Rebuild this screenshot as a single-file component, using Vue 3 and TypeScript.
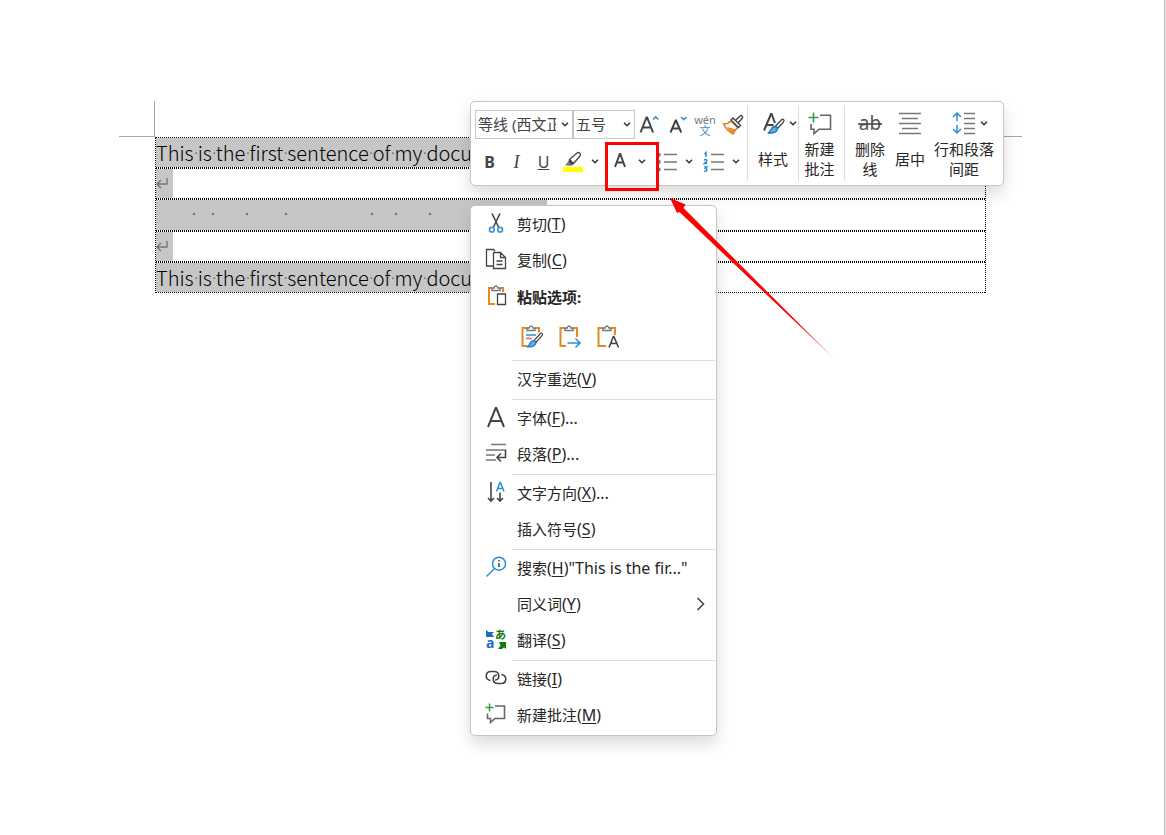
<script setup lang="ts">
interface MenuItem {
  id: string
  label: string
  accessKey: string
  tail?: string
  icon?: string
  submenu?: boolean
}

const words: string[] = ['This', 'is', 'the', 'first', 'sentence', 'of', 'my', 'docu']
const spaceMarks: number[] = [38, 57, 91, 130, 216, 240, 274]

const clipboardItems: MenuItem[] = [
  { id: 'cut', label: '剪切', accessKey: 'T', icon: 'cut' },
  { id: 'copy', label: '复制', accessKey: 'C', icon: 'copy' },
]

const groups: MenuItem[][] = [
  [{ id: 'reconvert', label: '汉字重选', accessKey: 'V' }],
  [
    { id: 'font', label: '字体', accessKey: 'F', tail: '...', icon: 'font' },
    { id: 'paragraph', label: '段落', accessKey: 'P', tail: '...', icon: 'paragraph' },
  ],
  [
    { id: 'direction', label: '文字方向', accessKey: 'X', tail: '...', icon: 'direction' },
    { id: 'symbol', label: '插入符号', accessKey: 'S' },
  ],
  [
    { id: 'search', label: '搜索', accessKey: 'H', tail: '"This is the fir..."', icon: 'search' },
    { id: 'synonym', label: '同义词', accessKey: 'Y', submenu: true },
    { id: 'translate', label: '翻译', accessKey: 'S', icon: 'translate' },
  ],
  [
    { id: 'link', label: '链接', accessKey: 'I', icon: 'link' },
    { id: 'comment', label: '新建批注', accessKey: 'M', icon: 'comment' },
  ],
]
</script>

<template>
  <div class="workspace">
    <main class="page">
      <i class="corner corner-left"></i>
      <i class="corner corner-right"></i>
      <div class="frame">
        <p class="line">
          <span class="selected sentence"><template v-for="(w, i) in words" :key="i"><span v-if="i" class="dot">·</span>{{ w }}</template></span>
        </p>
        <p class="line">
          <span class="selected mark"><svg width="14" height="14" viewBox="0 0 14 14"><path d="M11 1v6H1M5 3L1 7l4 4" /></svg></span>
        </p>
        <p class="line tall">
          <span class="selected blank">
            <svg width="391" height="30" viewBox="0 0 391 30"><circle v-for="x in spaceMarks" :key="x" :cx="x" cy="14" r="1.3" /></svg>
          </span>
        </p>
        <p class="line">
          <span class="selected mark"><svg width="14" height="14" viewBox="0 0 14 14"><path d="M11 1v6H1M5 3L1 7l4 4" /></svg></span>
        </p>
        <p class="line">
          <span class="selected sentence"><template v-for="(w, i) in words" :key="i"><span v-if="i" class="dot">·</span>{{ w }}</template></span>
        </p>
      </div>
    </main>

    <div class="toolbar" role="toolbar" aria-label="格式">
      <div class="fonts">
        <div class="row">
          <div class="combo family">
            <select aria-label="字体"><option>等线 (西文正文)</option></select>
            <svg class="chev" width="8" height="5" viewBox="0 0 8 5"><path d="M1 .8l3 3 3-3" /></svg>
          </div>
          <div class="combo size">
            <select aria-label="字号"><option>五号</option></select>
            <svg class="chev" width="8" height="5" viewBox="0 0 8 5"><path d="M1 .8l3 3 3-3" /></svg>
          </div>
          <button class="tool" aria-label="增大字号">
            <svg width="22" height="22" viewBox="0 0 22 22"><path class="ink bold" d="M2.500 18.500L8.500 3.500h.6l6 15M4.700 13.500h8.200" /><path class="blue" d="M15 5.500l2.700-2.600L20.400 5.500" /></svg>
          </button>
          <button class="tool" aria-label="减小字号">
            <svg width="22" height="22" viewBox="0 0 22 22"><path class="ink bold" d="M4.500 18.500L9.600 6.500h.5l5.100 12M6.400 14.500h6.900" /><path class="blue" d="M15 3l2.700 2.600L20.400 3" /></svg>
          </button>
          <button class="tool pinyin" aria-label="拼音指南"><span>wén</span><span>文</span></button>
          <button class="tool" aria-label="格式刷">
            <svg width="22" height="22" viewBox="0 0 22 22"><path d="M1.500 10c3.500 0 5.500-1 7.500-3l6.500 6.500c-1.500 2-3 4-4.500 6.500C7 18 3.500 14 1.500 10z" fill="#fff" stroke="#e07b1c" stroke-width="1.500" /><path d="M5 13l9 2.500-3.500 4.500C8 18 6.500 16 5 13z" fill="#ee8a2b" /><path d="M9 6l2-2 7.500 7.500-2 2zM13.500 6.500l4.500-4.500c1.500-1.200 3.500.8 2.300 2.300L16 9" fill="#fff" stroke="#444" stroke-width="1.400" /></svg>
          </button>
        </div>
        <div class="row controls">
          <button class="tool glyph" aria-label="加粗"><b>B</b></button>
          <button class="tool glyph" aria-label="倾斜"><em>I</em></button>
          <button class="tool glyph" aria-label="下划线"><u>U</u></button>
          <button class="split" aria-label="突出显示">
            <svg width="22" height="22" viewBox="0 0 22 22"><path d="M1 16h20v5H1z" fill="#ff0" /><path d="M3 14.500l4-5 4.500 4-1.800 1.200z" fill="#777" /><path class="ink thin" d="M7.500 8.500L15 2c2-1.500 4.500 1 3 3l-6.500 7.500zM7.500 8.500c-1 1.500 2 5 4 4" fill="#fff" /></svg>
            <svg class="chev" width="8" height="5" viewBox="0 0 8 5"><path d="M1 .8l3 3 3-3" /></svg>
          </button>
          <button class="split" aria-label="字体颜色">
            <svg width="22" height="22" viewBox="0 0 22 22"><path class="ink bold" d="M6 16l4.800-13h.5L16 16M7.700 11.500h6.600" /></svg>
            <svg class="chev" width="8" height="5" viewBox="0 0 8 5"><path d="M1 .8l3 3 3-3" /></svg>
          </button>
          <button class="split" aria-label="项目符号">
            <svg width="22" height="22" viewBox="0 0 22 22"><path d="M1 2h3.500v3.500H1zM1 9.300h3.500v3.500H1zM1 16.700h3.500v3.500H1z" fill="#2b8fd1" /><path class="gray" d="M8 3.500h13M8 11h13M8 18.500h13" /></svg>
            <svg class="chev" width="8" height="5" viewBox="0 0 8 5"><path d="M1 .8l3 3 3-3" /></svg>
          </button>
          <button class="split" aria-label="编号">
            <svg width="22" height="22" viewBox="0 0 22 22"><path class="blue thin" d="M1.500 3L3 1.500V6M1.200 9.500c.5-1.300 3-1.200 2.700.3-.2 1-2 1.800-2.700 2.700h3M1.200 16h2.700l-1.500 1.600c2 0 2 2.600 0 2.600H1.100" /><path class="gray" d="M8 3.500h13M8 11h13M8 18.500h13" /></svg>
            <svg class="chev" width="8" height="5" viewBox="0 0 8 5"><path d="M1 .8l3 3 3-3" /></svg>
          </button>
        </div>
      </div>

      <div class="group styles">
        <button class="big">
          <span class="art push">
            <svg width="24" height="24" viewBox="0 0 24 24"><path class="ink bold" d="M3 19.500L10 3h.6L14 12M5.500 14h7" /><path d="M22.500 8.500c1 .8.500 1.800-.5 3l-5.500 6-2.200-2 5.500-6c1-1.200 1.700-1.800 2.700-1z" fill="#fff" stroke="#444" stroke-width="1.300" /><path d="M14 15.500c1.800.2 2.800 1.500 2.300 3.200-.7 2.700-4.500 3.800-9.500 3.300 2.300-.8 2.700-2.500 3.500-4 .7-1.600 2-2.500 3.700-2.500z" fill="#5aaeea" stroke="#1c73b8" stroke-width="1.300" /></svg>
            <svg class="chev" width="8" height="5" viewBox="0 0 8 5"><path d="M1 .8l3 3 3-3" /></svg>
          </span>
          <span class="caption">样式</span>
        </button>
      </div>
      <div class="group comment">
        <button class="big">
          <span class="art">
            <svg width="24" height="24" viewBox="0 0 24 24"><path class="ink soft" d="M12 4.200h10.500v14H11l-5 4.500v-4.500H3V13" /><path d="M5.500 1.500v10M.5 6.500h10" stroke="#2f9e4c" stroke-width="1.600" /></svg>
          </span>
          <span class="caption">新建<br>批注</span>
        </button>
      </div>
      <div class="group last">
        <button class="big narrow">
          <span class="art strike"><span>ab</span><svg width="24" height="24" viewBox="0 0 24 24"><path class="ink" d="M0 13h24" /></svg></span>
          <span class="caption">删除<br>线</span>
        </button>
        <button class="big narrow">
          <span class="art">
            <svg width="24" height="24" viewBox="0 0 24 24"><path class="gray" d="M1 2.500h22M4 7.500h16M1 12.500h22M4 17.500h16M1 22.500h22" /></svg>
          </span>
          <span class="caption">居中</span>
        </button>
        <button class="big wide">
          <span class="art push">
            <svg width="24" height="24" viewBox="0 0 24 24"><path class="blue" d="M5 10V2M1 6l4-4 4 4M5 14v8M1 18l4 4 4-4" /><path class="gray" d="M12 2.500h11M12 7.500h11M12 12.500h11M12 17.500h11M12 22.500h11" /></svg>
            <svg class="chev" width="8" height="5" viewBox="0 0 8 5"><path d="M1 .8l3 3 3-3" /></svg>
          </span>
          <span class="caption">行和段落<br>间距</span>
        </button>
      </div>
    </div>

    <div class="menu" role="menu">
      <button v-for="item in clipboardItems" :key="item.id" class="item" role="menuitem">
        <svg v-if="item.icon === 'cut'" class="icon" width="22" height="22" viewBox="0 0 22 22"><path class="ink" d="M7 1.500l6.500 13.500M15 1.500L8.500 15" /><circle class="blue" cx="6.800" cy="17.700" r="2.400" /><circle class="blue" cx="15.200" cy="17.700" r="2.400" /></svg>
        <svg v-else class="icon" width="22" height="22" viewBox="0 0 22 22"><path class="ink thin" d="M8 18H1.500V1.500h7L10 3M8.500 4.500h7l5 5v11h-12zM15.500 4.500v5h5M11.500 13h6M11.500 16.500h6" /></svg>
        <span>{{ item.label }}<span class="latin">(<u>{{ item.accessKey }}</u>)</span></span>
      </button>
      <div class="heading">
        <svg class="icon" width="22" height="22" viewBox="0 0 22 22"><path class="orange" d="M7 3H4v16h6M15 3h3v4" /><path class="metal" d="M7 5.500V3h2.200c.4-2.600 3.200-2.600 3.600 0H15v2.500z" /><path class="ink thin" d="M12.500 9h8v10.500h-8z" fill="#fff" /></svg>
        <b>粘贴选项:</b>
      </div>
      <div class="paste">
        <button aria-label="保留源格式">
          <svg width="24" height="24" viewBox="0 0 24 24"><path class="orange" d="M7 3H2.500v18h5M15 3h4v4.500" /><path class="metal" d="M7 5.500V3h2.200c.4-2.600 3.200-2.600 3.600 0H15v2.500z" /><path d="M6 10h10" stroke="#2b8fd1" stroke-width="1.500" /><path d="M6 13.500h6" stroke="#f0606a" stroke-width="1.500" /><path d="M22 8.500c1 .8.300 1.600-.5 2.600l-5.500 6.400-2-1.800 5.500-6.200C20.500 8.500 21.200 7.700 22 8.500z" fill="#fff" stroke="#444" stroke-width="1.200" /><path d="M13.500 15.500c1.800.2 2.700 1.500 2.200 3.200-.7 2.500-4 3.500-8.700 3.200 2.300-.9 2.200-2.400 3-3.900.7-1.600 1.900-2.500 3.500-2.500z" fill="#5aaeea" stroke="#1c73b8" stroke-width="1.200" /></svg>
        </button>
        <button aria-label="合并格式">
          <svg width="24" height="24" viewBox="0 0 24 24"><path class="orange" d="M7 3H2.500v18H8M15 3h4v9" /><path class="metal" d="M7 5.500V3h2.200c.4-2.600 3.200-2.600 3.600 0H15v2.500z" /><path class="blue" d="M9.500 18h12.500M17.500 13.500l4.500 4.500-4.500 4.500" /></svg>
        </button>
        <button aria-label="只保留文本">
          <svg width="24" height="24" viewBox="0 0 24 24"><path class="orange" d="M7 3H2.500v18H10M15 3h4v7" /><path class="metal" d="M7 5.500V3h2.200c.4-2.600 3.200-2.600 3.600 0H15v2.500z" /><path class="ink" d="M13 22.500l4.400-11h.5l4.600 11M14.600 18.500h6.200" /></svg>
        </button>
      </div>
      <template v-for="(group, g) in groups" :key="g">
        <hr>
        <button v-for="item in group" :key="item.id" class="item" role="menuitem">
          <svg class="icon" width="22" height="22" viewBox="0 0 22 22">
            <path v-if="item.icon === 'font'" class="ink bold" d="M3 21L10.700 2h.6L19 21M5.800 15h10.500" />
            <g v-else-if="item.icon === 'paragraph'"><path class="gray" d="M6 2.500h15M1 8h20M1 13h9M1 18h10" /><path class="ink" d="M20.500 8v7.500h-8M16 11.500l-4 4 4 4" /></g>
            <g v-else-if="item.icon === 'direction'"><path class="ink" d="M6 1v19M3 17l3 3.200L9 17M15 11.500V20M12 17l3 3.200 3-3.200" /><path class="blue" d="M11.500 10.500L15 1.500h.4l3.600 9M12.800 7.500h5" /></g>
            <g v-else-if="item.icon === 'search'" class="blue"><circle cx="14" cy="7.700" r="6.500" /><path d="M9.500 12.500L1.500 20.500" /><path d="M14 7v4M14 4v1.500" stroke="#444" /></g>
            <g v-else-if="item.icon === 'translate'">
              <path d="M1 2l2.500 2H9L7 6l2 3H1z" fill="#1b6ec2" /><path d="M14 14h7v7l-2-1.500L17 21h-4l2.500-3.500z" fill="#107c10" />
              <text x="1" y="20" class="latin-a">a</text><text x="10" y="11" class="kana-a">あ</text>
            </g>
            <path v-else-if="item.icon === 'link'" class="ink" d="M5.500 13.500C-.5 12.500 0 4.500 6 4.500h3c6 0 6.500 8 1 8.500M16.500 7.500c6 1 5.500 9-.5 9h-3c-6 0-6.500-8-1-8.500" />
            <g v-else-if="item.icon === 'comment'"><path class="ink soft" d="M10 3h9.500v12.500H10l-4.500 4v-4H2.500v-5" /><path d="M4.500.5v8M.5 4.500h8" stroke="#2f9e4c" stroke-width="1.500" /></g>
          </svg>
          <span>{{ item.label }}<span class="latin">(<u>{{ item.accessKey }}</u>){{ item.tail }}</span></span>
          <svg v-if="item.submenu" class="more" width="9" height="14" viewBox="0 0 9 14"><path class="ink" d="M1.500 1l6 6-6 6" /></svg>
        </button>
      </template>
    </div>

    <div class="highlight"></div>
    <svg class="arrow" width="166" height="163" viewBox="0 0 166 163">
      <defs><linearGradient id="fade" x1="0" y1="0" x2="1" y2="1"><stop offset=".75" stop-color="#f00" /><stop offset="1" stop-color="#f00" stop-opacity=".4" /></linearGradient></defs>
      <path d="M0 0L15.500 6.500 13.500 10 165.500 162 9.500 14 7 15z" fill="url(#fade)" />
    </svg>
  </div>
</template>

<style>
body {
  background: #fff;
}
</style>

<style scoped>
.workspace {
  position: relative;
  box-sizing: border-box;
  min-height: 100vh;
  overflow: hidden;
  border-right: 1px solid #e6e6e6;
  font: 15px/20px "Noto Sans", "Noto Sans CJK SC", sans-serif;
  color: #262626;
}
.page {
  position: relative;
  box-sizing: border-box;
  min-height: 100vh;
  padding: 137px 178px 0 155px;
  border-right: 1px solid #bdbdbd;
}
.corner {
  position: absolute;
  top: 101px;
  width: 35px;
  height: 35px;
  border-bottom: 1px solid #a6a6a6;
}
.corner-left {
  left: 119px;
  border-right: 1px solid #a6a6a6;
}
.corner-right {
  right: 142px;
  border-left: 1px solid #a6a6a6;
}
.frame {
  border: 1px dotted #000;
  border-width: 0 1px;
}
.line {
  display: flex;
  box-sizing: border-box;
  height: 31px;
  margin: 0;
  border: 1px dotted #000;
  border-width: 1px 0;
}
.line.tall {
  height: 32px;
}
.selected {
  display: flex;
  align-items: center;
  background: #c6c6c6;
}
.sentence {
  width: 391px;
  font: 300 20px/29px "Noto Sans CJK SC", sans-serif;
  color: #000;
}
.dot {
  width: 4px;
  text-align: center;
  font-family: "Open Sans", sans-serif;
  color: #666;
}
.mark {
  width: 17px;
}
.mark path {
  fill: none;
  stroke: #777;
  stroke-width: 1.4;
}
.blank circle {
  fill: #777;
}
button {
  padding: 0;
  border: 0;
  background: none;
  font: inherit;
  color: inherit;
}
svg {
  display: block;
  flex: none;
  overflow: visible;
  fill: none;
}
.ink {
  stroke: #444;
  stroke-width: 1.6;
}
.bold {
  stroke-width: 2;
}
.thin {
  stroke-width: 1.3;
}
.soft {
  stroke: #666;
}
.gray {
  stroke: #777;
  stroke-width: 1.5;
}
.blue {
  stroke: #2b8fd1;
  stroke-width: 1.5;
}
.orange {
  stroke: #e28a24;
  stroke-width: 2;
}
.metal {
  fill: #fff;
  stroke: #777;
  stroke-width: 1.4;
}
.chev {
  stroke: #333;
  stroke-width: 1.5;
}
.toolbar,
.menu {
  position: absolute;
  left: 470px;
  box-sizing: border-box;
  border: 1px solid #c6c6c6;
  border-radius: 5px;
  background: #fff;
  box-shadow: 0 8px 16px rgba(0, 0, 0, 0.14);
}
.toolbar {
  top: 101px;
  display: flex;
  height: 85px;
  padding: 4px 5px 4px 4px;
}
.fonts {
  display: flex;
  flex-direction: column;
  gap: 8px;
  padding-top: 4px;
}
.row {
  display: flex;
  align-items: center;
  width: 272px;
  height: 29px;
}
.controls {
  box-sizing: border-box;
  padding-left: 1px;
}
.combo {
  display: grid;
  align-items: center;
  box-sizing: border-box;
  height: 29px;
  border: 1px solid #c6c6c6;
}
.combo > * {
  grid-area: 1 / 1;
}
.combo .chev {
  justify-self: end;
  margin-right: 3px;
  pointer-events: none;
}
.family {
  width: 98px;
}
.size {
  width: 62px;
}
select {
  width: 100%;
  min-width: 0;
  height: 26px;
  padding: 0 16px 2px 2px;
  border: 0;
  appearance: none;
  background: none;
  font: inherit;
  color: #444;
}
.tool {
  display: flex;
  align-items: center;
  justify-content: center;
  width: 28px;
  height: 29px;
}
.pinyin {
  flex-direction: column;
  font-size: 11px;
  line-height: 11px;
  color: #777;
}
.pinyin span + span {
  color: #2b8fd1;
}
.glyph {
  width: 27px;
  font-size: 16px;
  color: #444;
}
.glyph em {
  font-family: "Liberation Serif", serif;
  font-size: 18px;
}
.split {
  display: flex;
  align-items: center;
  justify-content: space-between;
  width: 47px;
  height: 29px;
  padding: 0 5px;
}
.group {
  display: flex;
  border-left: 1px solid #dcdcdc;
}
.styles .big {
  width: 50px;
}
.comment .big {
  width: 45px;
  padding-right: 4px;
}
.group.last {
  padding-left: 5px;
}
.big {
  display: flex;
  flex-direction: column;
  align-items: center;
}
.big.narrow {
  width: 40px;
}
.big.wide {
  width: 68px;
}
.art {
  display: flex;
  align-items: center;
  justify-content: center;
  gap: 4px;
  height: 33px;
  padding-top: 1px;
  box-sizing: border-box;
}
.art.push {
  padding-left: 12px;
}
.strike {
  display: grid;
  justify-items: center;
  font-size: 19px;
  color: #555;
}
.strike > * {
  grid-area: 1 / 1;
}
.caption {
  display: flex;
  align-items: center;
  height: 40px;
  text-align: center;
}
.menu {
  top: 205px;
  width: 247px;
  padding-bottom: 2px;
}
.item {
  display: flex;
  align-items: center;
  width: 100%;
  height: 36px;
  padding: 0 11px 0 14px;
  text-align: left;
}
.icon {
  margin: 0 10px 2px 0;
}
.latin {
  font-size: 16px;
}
.item u {
  text-underline-offset: 2px;
}
.more {
  margin-left: auto;
}
.heading {
  display: flex;
  align-items: center;
  height: 38px;
  padding-left: 14px;
}
.paste {
  display: flex;
  gap: 14px;
  height: 42px;
  padding-left: 49px;
}
hr {
  height: 1px;
  margin: 2px 1px 0 41px;
  border: 0;
  background: #dcdcdc;
}
.latin-a {
  font: 700 14px "Noto Sans", sans-serif;
  fill: #1b6ec2;
}
.kana-a {
  font: 700 11px "Noto Sans CJK JP", sans-serif;
  fill: #107c10;
}
.highlight {
  position: absolute;
  top: 142px;
  left: 605px;
  box-sizing: border-box;
  width: 54px;
  height: 49px;
  border: 3px solid #f00;
}
.arrow {
  position: absolute;
  top: 198px;
  left: 670px;
}
</style>
